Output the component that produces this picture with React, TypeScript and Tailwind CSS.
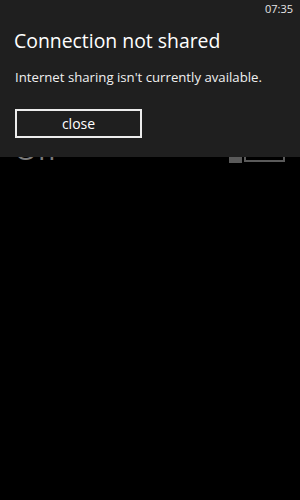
export default function App() {
  return (
    <div
      className="relative w-[300px] h-[500px] overflow-hidden bg-black text-white"
      style={{ fontFamily: '"Open Sans", "Noto Sans", sans-serif' }}
    >
      {/* underlying settings page, mostly hidden by the dialog */}
      <div className="h-[164px] flex items-end justify-between pl-[14px] pr-[15px]">
        <span className="text-[30px] leading-[30px] text-[#7a7a7a]">Off</span>
        <div className="flex items-end gap-[2px]">
          <div className="w-[13px] h-[20px] mb-[1px] bg-[#5a5a5a]" />
          <div className="w-[41px] h-[22px] mb-[2px] border-[2px] border-[#5a5a5a]" />
        </div>
      </div>

      {/* dialog */}
      <div className="absolute top-0 left-0 right-0 h-[157px] bg-[#1f1f1f] flex flex-col">
        <div className="flex justify-end pr-[7px] pt-[2px] text-[11px] leading-[14px] text-[#e6e6e6]">
          07:35
        </div>
        <h1 className="mt-[13px] ml-[14px] text-[19.4px] leading-[24px] text-white">
          Connection not shared
        </h1>
        <p className="mt-[15px] ml-[15px] text-[13.2px] leading-[18px] text-[#f0f0f0]">
          Internet sharing isn't currently available.
        </p>
        <button className="mt-[23px] ml-[15px] w-[127px] h-[29px] border-[2px] border-[#ececec] text-[14px] leading-[18px] text-white">
          close
        </button>
      </div>
    </div>
  );
}
